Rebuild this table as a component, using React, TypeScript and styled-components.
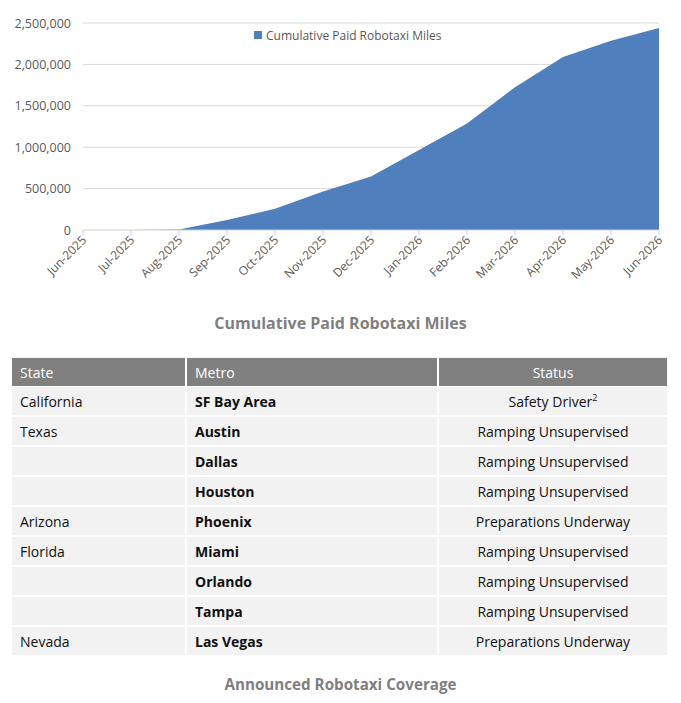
import React from "react";
import styled, { createGlobalStyle } from "styled-components";

const GlobalStyle = createGlobalStyle`
  html, body {
    margin: 0;
    padding: 0;
    background: #ffffff;
  }
  body {
    font-family: "Open Sans", Lato, "Liberation Sans", sans-serif;
    color: #1a1a1a;
  }
`;

const Page = styled.div`
  width: 681px;
  display: flex;
  flex-direction: column;
  align-items: stretch;
`;

const ChartSvg = styled.svg`
  display: block;
  width: 681px;
  height: 300px;
  font-family: "Open Sans", "Liberation Sans", sans-serif;
`;

const Caption = styled.div<{ $top: number; $size: number }>`
  text-align: center;
  font-size: ${(p) => p.$size}px;
  line-height: 20px;
  font-weight: 700;
  color: #7f7f7f;
  margin-top: ${(p) => p.$top}px;
`;

const Table = styled.table`
  margin: 24px 14px 0 12px;
  border-collapse: separate;
  border-spacing: 0;
  font-size: 14px;
  border-top: 1px solid #f4f4f4;
`;

const HeadCell = styled.th<{ $w: number; $center?: boolean }>`
  width: ${(p) => p.$w}px;
  height: 29px;
  padding: 0 8px;
  background: #808080;
  color: #ffffff;
  font-weight: 400;
  text-align: ${(p) => (p.$center ? "center" : "left")};
  border-right: 2px solid #ffffff;
  border-bottom: 1px solid #ffffff;
  box-sizing: border-box;
  &:last-child {
    border-right: none;
  }
`;

const Cell = styled.td<{ $bold?: boolean; $center?: boolean }>`
  height: 30px;
  padding: 0 8px;
  background: #f2f2f2;
  color: #111111;
  font-weight: ${(p) => (p.$bold ? 700 : 400)};
  text-align: ${(p) => (p.$center ? "center" : "left")};
  border-right: 2px solid #ffffff;
  border-bottom: 2px solid #ffffff;
  box-sizing: border-box;
  &:last-child {
    border-right: none;
  }
  tr:last-child & {
    border-bottom: none;
    height: 28px;
  }
`;

const Sup = styled.sup`
  font-size: 9px;
  line-height: 0;
`;

const months = [
  "Jun-2025", "Jul-2025", "Aug-2025", "Sep-2025", "Oct-2025", "Nov-2025", "Dec-2025",
  "Jan-2026", "Feb-2026", "Mar-2026", "Apr-2026", "May-2026", "Jun-2026",
];
const values = [0, 1000, 6000, 122000, 256000, 465000, 645000, 965000, 1285000, 1725000, 2090000, 2285000, 2440000];

const X0 = 83;
const X1 = 659;
const Y0 = 230;
const PER = 41.4 / 500000;

const xAt = (i: number) => X0 + ((X1 - X0) / 12) * i;
const yAt = (v: number) => Y0 - v * PER;

const Chart = () => {
  const pts = values.map((v, i) => `${xAt(i).toFixed(1)},${yAt(v).toFixed(1)}`).join(" L");
  const area = `M${X0},${Y0} L${pts} L${X1},${Y0} Z`;
  const ticks = [0, 500000, 1000000, 1500000, 2000000, 2500000];
  return (
    <ChartSvg viewBox="0 0 681 300">
      {ticks.map((t) => (
        <g key={t}>
          {t > 0 && <line x1={X0} x2={X1} y1={yAt(t)} y2={yAt(t)} stroke="#d9d9d9" strokeWidth={1} />}
          <text x={71} y={yAt(t) + 4.5} textAnchor="end" fontSize={12.5} fill="#595959">
            {t.toLocaleString("en-US")}
          </text>
        </g>
      ))}
      <path d={area} fill="#4f7fbd" />
      <line x1={X0} x2={X1} y1={Y0} y2={Y0} stroke="#d0d0d0" strokeWidth={1} />
      {months.map((m, i) => (
        <g key={m}>
          <line x1={xAt(i)} x2={xAt(i)} y1={Y0} y2={Y0 + 5} stroke="#d0d0d0" strokeWidth={1} />
          <text
            x={xAt(i) + 4}
            y={Y0 + 11}
            textAnchor="end"
            fontSize={12}
            fill="#595959"
            transform={`rotate(-45 ${xAt(i) + 4} ${Y0 + 11})`}
          >
            {m}
          </text>
        </g>
      ))}
      <rect x={254} y={31} width={8} height={8} fill="#4f7fbd" />
      <text x={266} y={39.5} fontSize={12} fill="#595959">
        Cumulative Paid Robotaxi Miles
      </text>
    </ChartSvg>
  );
};

type Row = { state: string; metro: string; status: string; sup?: boolean };

const rows: Row[] = [
  { state: "California", metro: "SF Bay Area", status: "Safety Driver", sup: true },
  { state: "Texas", metro: "Austin", status: "Ramping Unsupervised" },
  { state: "", metro: "Dallas", status: "Ramping Unsupervised" },
  { state: "", metro: "Houston", status: "Ramping Unsupervised" },
  { state: "Arizona", metro: "Phoenix", status: "Preparations Underway" },
  { state: "Florida", metro: "Miami", status: "Ramping Unsupervised" },
  { state: "", metro: "Orlando", status: "Ramping Unsupervised" },
  { state: "", metro: "Tampa", status: "Ramping Unsupervised" },
  { state: "Nevada", metro: "Las Vegas", status: "Preparations Underway" },
];

export default function App() {
  return (
    <>
      <GlobalStyle />
      <Page>
        <Chart />
        <Caption $top={13} $size={16}>Cumulative Paid Robotaxi Miles</Caption>
        <Table>
          <thead>
            <tr>
              <HeadCell $w={175}>State</HeadCell>
              <HeadCell $w={252}>Metro</HeadCell>
              <HeadCell $w={228} $center>Status</HeadCell>
            </tr>
          </thead>
          <tbody>
            {rows.map((r) => (
              <tr key={r.metro}>
                <Cell>{r.state}</Cell>
                <Cell $bold>{r.metro}</Cell>
                <Cell $center>
                  {r.status}
                  {r.sup && <Sup>2</Sup>}
                </Cell>
              </tr>
            ))}
          </tbody>
        </Table>
        <Caption $top={19} $size={15.2}>Announced Robotaxi Coverage</Caption>
      </Page>
    </>
  );
}
